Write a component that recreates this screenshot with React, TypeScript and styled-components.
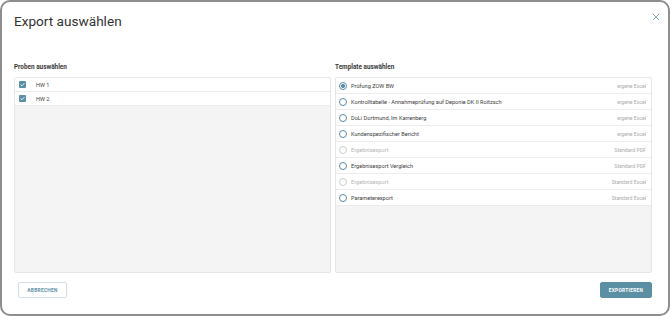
import { createGlobalStyle, styled } from "styled-components";

const GlobalStyle = createGlobalStyle`
  html, body {
    margin: 0;
    padding: 0;
    background: #ffffff;
  }
  body {
    font-family: Roboto, "Liberation Sans", sans-serif;
    color: #333333;
  }
  * {
    box-sizing: border-box;
  }
`;

type Sample = { id: number; name: string; checked: boolean };
type Template = {
  id: number;
  name: string;
  kind: string;
  selected?: boolean;
  disabled?: boolean;
};

const samples: Sample[] = [
  { id: 1, name: "HW 1", checked: true },
  { id: 2, name: "HW 2", checked: true },
];

const templates: Template[] = [
  { id: 1, name: "Prüfung ZOW BW", kind: "eigene Excel", selected: true },
  {
    id: 2,
    name: "Kontrolltabelle - Annahmeprüfung auf Deponie DK II Roitzsch",
    kind: "eigene Excel",
  },
  { id: 3, name: "DoLi Dortmund, Im Karrenberg", kind: "eigene Excel" },
  { id: 4, name: "Kundenspezifischer Bericht", kind: "eigene Excel" },
  { id: 5, name: "Ergebnisexport", kind: "Standard PDF", disabled: true },
  { id: 6, name: "Ergebnisexport Vergleich", kind: "Standard PDF" },
  { id: 7, name: "Ergebnisexport", kind: "Standard Excel", disabled: true },
  { id: 8, name: "Parameterexport", kind: "Standard Excel" },
];

export default function App() {
  return (
    <>
      <GlobalStyle />
      <Modal>
        <Header>
          <Title>Export auswählen</Title>
          <CloseButton aria-label="Schließen">
            <svg width="8" height="8" viewBox="0 0 8 8">
              <path
                d="M1.2 1.2 L6.8 6.8 M6.8 1.2 L1.2 6.8"
                stroke="#7aa3b6"
                strokeWidth="0.9"
                strokeLinecap="round"
              />
            </svg>
          </CloseButton>
        </Header>

        <Columns>
          <Section>
            <SectionLabel>Proben auswählen</SectionLabel>
            <ListBox>
              {samples.map((s) => (
                <SampleRow key={s.id}>
                  <CheckBox $checked={s.checked}>
                    {s.checked && (
                      <svg width="7" height="7" viewBox="0 0 7 7">
                        <path
                          d="M1.6 3.6 L2.9 4.8 L5.4 2.2"
                          fill="none"
                          stroke="#ffffff"
                          strokeWidth="0.9"
                        />
                      </svg>
                    )}
                  </CheckBox>
                  <RowText>{s.name}</RowText>
                </SampleRow>
              ))}
            </ListBox>
          </Section>

          <Section>
            <SectionLabel>Template auswählen</SectionLabel>
            <ListBox>
              {templates.map((t) => (
                <TemplateRow key={t.id}>
                  <Radio $selected={!!t.selected} $disabled={!!t.disabled} />
                  <RowText $disabled={!!t.disabled}>{t.name}</RowText>
                  <Kind>{t.kind}</Kind>
                </TemplateRow>
              ))}
            </ListBox>
          </Section>
        </Columns>

        <Footer>
          <SecondaryButton>Abbrechen</SecondaryButton>
          <PrimaryButton>Exportieren</PrimaryButton>
        </Footer>
      </Modal>
    </>
  );
}

const Modal = styled.div`
  width: 670px;
  height: 316px;
  border: 2px solid #8e8e8e;
  border-radius: 10px;
  background: #ffffff;
  display: flex;
  flex-direction: column;
  padding: 0 16px 16px 12px;
`;

const Header = styled.div`
  display: flex;
  justify-content: space-between;
  align-items: flex-start;
  height: 58px;
  padding-top: 10px;
`;

const Title = styled.h1`
  margin: 0;
  font-size: 13.6px;
  font-weight: 400;
  color: #333333;
  line-height: 18px;
`;

const CloseButton = styled.button`
  border: none;
  background: none;
  padding: 0;
  margin: 1px -8px 0 0;
  width: 8px;
  height: 8px;
  display: flex;
  cursor: pointer;
`;

const Columns = styled.div`
  flex: 1;
  display: grid;
  grid-template-columns: 1fr 1fr;
  gap: 4px;
`;

const Section = styled.div`
  display: flex;
  flex-direction: column;
`;

const SectionLabel = styled.div`
  font-size: 6.4px;
  font-weight: 700;
  color: #3a3a3a;
  height: 17px;
  line-height: 9px;
  padding-top: 3px;
`;

const ListBox = styled.div`
  flex: 1;
  background: #f4f4f4;
  border: 1px solid #e6e6e6;
  border-radius: 2px;
  display: flex;
  flex-direction: column;
  overflow: hidden;
`;

const SampleRow = styled.div`
  display: flex;
  align-items: center;
  height: 14px;
  padding-left: 4px;
  gap: 10px;
  background: #ffffff;
  border-bottom: 1px solid #ececec;
`;

const TemplateRow = styled.div`
  display: flex;
  align-items: center;
  height: 16px;
  padding: 0 5px 0 3px;
  gap: 4px;
  background: #ffffff;
  border-bottom: 1px solid #ececec;
`;

const CheckBox = styled.span<{ $checked: boolean }>`
  width: 7px;
  height: 7px;
  border-radius: 1px;
  display: flex;
  align-items: center;
  justify-content: center;
  background: ${({ $checked }) => ($checked ? "#5a8fa6" : "#ffffff")};
  border: ${({ $checked }) => ($checked ? "none" : "1px solid #9ab")};
`;

const Radio = styled.span<{ $selected: boolean; $disabled: boolean }>`
  width: 8px;
  height: 8px;
  border-radius: 50%;
  flex-shrink: 0;
  border: 1px solid ${({ $disabled }) => ($disabled ? "#cfcfcf" : "#5a8fa6")};
  background: ${({ $selected }) =>
    $selected ? "radial-gradient(circle, #5a8fa6 0 1.8px, #ffffff 2.3px)" : "#ffffff"};
`;

const RowText = styled.span<{ $disabled?: boolean }>`
  flex: 1;
  font-size: 5.6px;
  color: ${({ $disabled }) => ($disabled ? "#b5b5b5" : "#3c3c3c")};
  white-space: nowrap;
`;

const Kind = styled.span`
  font-size: 5.2px;
  color: #ababab;
  white-space: nowrap;
`;

const Footer = styled.div`
  display: flex;
  justify-content: space-between;
  align-items: flex-start;
  padding: 9px 0 0 4px;
  height: 25px;
`;

const BaseButton = styled.button`
  height: 16px;
  border-radius: 2px;
  font-family: Roboto, "Liberation Sans", sans-serif;
  font-size: 4.8px;
  font-weight: 700;
  text-transform: uppercase;
  letter-spacing: 0.3px;
  cursor: pointer;
`;

const SecondaryButton = styled(BaseButton)`
  width: 49px;
  background: #ffffff;
  border: 1px solid #d3dfe5;
  color: #5a8fa6;
`;

const PrimaryButton = styled(BaseButton)`
  width: 52px;
  background: #5b8fa3;
  border: 1px solid #5b8fa3;
  color: #ffffff;
`;
